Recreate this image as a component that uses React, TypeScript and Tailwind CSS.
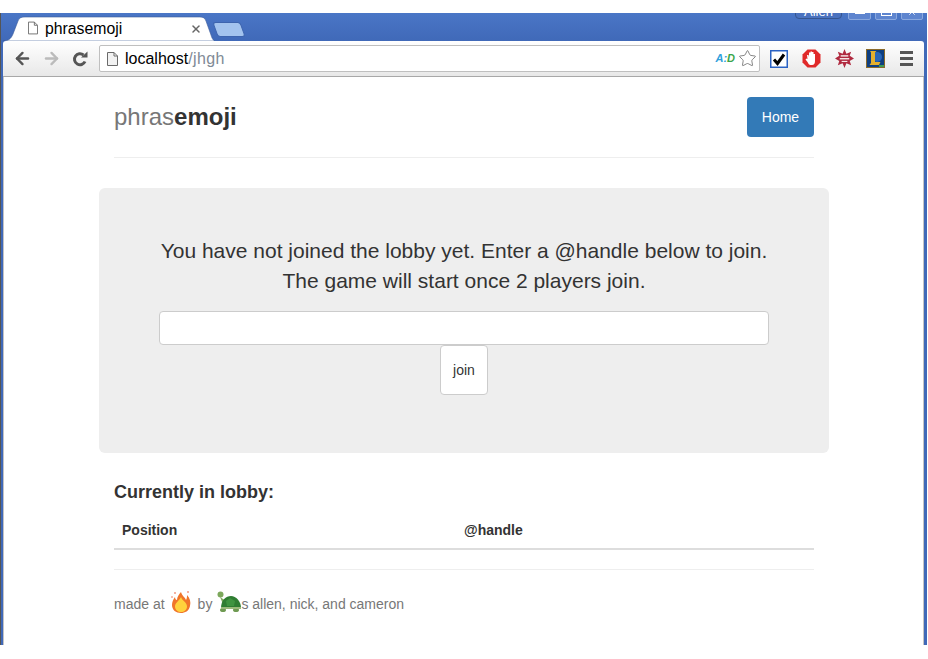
import { ArrowLeft, ArrowRight, Star, X } from "lucide-react";

const sans = "font-['Liberation_Sans',Arial,sans-serif]";

const PageIcon = ({ w, h, fill }: { w: number; h: number; fill: string }) => (
  <svg width={w} height={h} viewBox="0 0 11 14">
    <path d="M0.500 0.500 H7 L10.500 4 V13.500 H0.500 Z M7 0.500 V4 H10.500" fill={fill} stroke="#6a6a6a" strokeWidth="1" />
  </svg>
);

const Reload = () => (
  <svg width="16" height="16" viewBox="0 0 16 16">
    <path d="M13 10.500 A5.500 5.500 0 1 1 11.500 4" fill="none" stroke="#555" strokeWidth="3" />
    <path d="M9 6.500 L15.500 6.500 L15.500 0.500 Z" fill="#555" />
  </svg>
);

const TabShape = () => (
  <svg width="212" height="28" viewBox="0 0 212 28" className="absolute left-[2px] top-0">
    <path
      d="M0 28 C5 28 8 26 10 21 L15 8 C16 5 18 4 22 4 L197 4 C200 4 202 5 203 8 L208 22 C209 26 211 28 212 28 Z"
      fill="#ffffff"
      stroke="#3a5a98"
      strokeWidth="0.6"
    />
  </svg>
);

const Extensions = () => (
  <div className="flex items-center">
    <svg width="18" height="18" viewBox="0 0 18 18">
      <rect x="0.750" y="0.750" width="16.500" height="16.500" fill="#ffffff" stroke="#2a62c4" strokeWidth="1.500" />
      <path d="M4 9.500 L7.500 13.500 L14 4.500" fill="none" stroke="#000000" strokeWidth="3" />
    </svg>
    <svg width="19" height="19" viewBox="0 0 19 19" className="ml-[14px]">
      <path d="M5.500 0.500 H13.500 L18.500 5.500 V13.500 L13.500 18.500 H5.500 L0.500 13.500 V5.500 Z" fill="#e02a2a" />
      <path
        d="M5.500 10 L5 6 H6.500 L7 8 V3.500 H8.500 V8 V2.500 H10 V8 V3 H11.500 V8.500 V5 H13 V12 C13 14.500 12 16 10 16 H8.500 C7 16 6.500 15 5.500 13 L3.500 10.500 L4.500 9.500 Z"
        fill="#ffffff"
      />
    </svg>
    <svg width="19" height="19" viewBox="0 0 20 20" className="ml-[14px]">
      <path
        d="M10 0 L12 5 L17 3 L15.500 7 L20 10 L15.500 12.500 L17 17 L12 15 L10 20 L8 15 L3 17 L4.500 12.500 L0 10 L4.500 7 L3 3 L8 5 Z"
        fill="#b02a40"
      />
      <rect x="6" y="6.500" width="8" height="1.500" fill="#f6e8e8" />
      <rect x="5" y="9.500" width="10" height="1.500" fill="#f6e8e8" />
      <rect x="7" y="12.500" width="6" height="1.200" fill="#f6e8e8" />
    </svg>
    <svg width="19" height="19" viewBox="0 0 19 19" className="ml-[12px]">
      <rect x="0.500" y="0.500" width="18" height="18" fill="#0f3f80" stroke="#8a6a2a" />
      <circle cx="11" cy="8" r="5" fill="#2a66b8" />
      <path d="M4 2 H10.500 L9 3.500 V13 H14.500 L13 16 H3.500 L5 14 V3.500 Z" fill="#e4b02e" />
      <rect x="13" y="16" width="5" height="2" fill="#3f9a55" />
    </svg>
    <div className="ml-[15px] flex w-[13px] flex-col gap-[3px]">
      <div className="h-[3px] bg-[#555]" />
      <div className="h-[3px] bg-[#555]" />
      <div className="h-[3px] bg-[#555]" />
    </div>
  </div>
);

const TitleBar = () => (
  <div className="relative h-[28px] shrink-0 overflow-hidden bg-gradient-to-b from-[#4a76c6] to-[#4069b8]">
    <TabShape />
    <div className="absolute left-[27px] top-[8px]">
      <PageIcon w={10} h={14} fill="#ffffff" />
    </div>
    <span className="absolute left-[44px] top-[7px] text-[15.800px] leading-[18px] text-black">phrasemoji</span>
    <X size={12} strokeWidth={3} className="absolute left-[189px] top-[10px] text-[#666]" />
    <div className="absolute left-[214px] top-[9px] h-[15px] w-[28px] skew-x-[20deg] rounded-[3px] border border-[#3d64ae] bg-[#a3c3ee]" />
    <div className="absolute -top-[6px] left-[794px] flex h-[12px] w-[47px] items-end justify-center rounded-[4px] border border-[#35558f] bg-[#4a72bf] text-[13px] leading-[12px] text-white">
      Allen
    </div>
    <div className="absolute -top-[6px] left-[847px] flex h-[13px] w-[23px] items-end justify-center rounded-[2px] border border-[#8aa8de] bg-[#5e85cf] pb-[5px]">
      <div className="h-[2px] w-[10px] bg-white" />
    </div>
    <div className="absolute -top-[6px] left-[874px] flex h-[13px] w-[22px] items-end justify-center rounded-[2px] border border-[#8aa8de] bg-[#5e85cf] pb-[3px]">
      <div className="h-[5px] w-[11px] border border-t-0 border-white" />
    </div>
    <div className="absolute -top-[6px] left-[900px] flex h-[13px] w-[22px] items-end justify-center rounded-[2px] border border-[#8aa8de] bg-[#5e85cf]">
      <X size={10} strokeWidth={2} className="mb-[2px] text-white" />
    </div>
  </div>
);

const Toolbar = () => (
  <div className="flex h-[36px] shrink-0 items-center rounded-t-[3px] border-b border-[#a8a8a8] bg-gradient-to-b from-white to-[#e8e8e8] pl-[10px]">
    <ArrowLeft size={19} strokeWidth={3} className="text-[#555]" />
    <ArrowRight size={19} strokeWidth={3} className="ml-[10px] text-[#bbb]" />
    <div className="ml-[11px]">
      <Reload />
    </div>
    <div className="ml-[11px] flex h-[27px] w-[661px] items-center rounded-[2px] border border-[#bfbfbf] bg-white pl-[7px] pr-[2px]">
      <PageIcon w={11} h={14} fill="#f2f2f2" />
      <span className="ml-[7px] text-[16px] leading-none text-black">
        localhost<span className="tracking-[0.400px] text-[#808a96]">/jhgh</span>
      </span>
      <span className="ml-auto text-[11px] font-bold italic leading-none text-[#2f9fdc]">
        A:<span className="text-[#3aa64a]">D</span>
      </span>
      <Star size={19} strokeWidth={1} className="ml-[3px] text-[#666]" />
    </div>
    <div className="ml-[10px]">
      <Extensions />
    </div>
  </div>
);

const Fire = () => (
  <svg width="22" height="24" viewBox="0 0 22 24" className="-mt-[3px] ml-[5px]">
    <path
      d="M11 2 C12 6 15 7 16 10 C17 8 17 7 17 5 C20 8 21 12 20 16 C19 21 15 23 11 23 C6 23 2 20 2 15 C2 12 3 10 5 7 C5 9 6 10 7 10 C7 7 9 4 11 2 Z"
      fill="#f0752a"
    />
    <path
      d="M11 7 C12 11 17 12 17 16.500 C17 20 14 22 11 22 C8 22 5 20 5 16.500 C5 13 9 11 11 7 Z"
      fill="#ffd23c"
    />
    <circle cx="5" cy="3" r="0.800" fill="#e8502a" />
    <circle cx="18" cy="2" r="0.800" fill="#e8502a" />
    <circle cx="2" cy="7" r="0.700" fill="#e8502a" />
  </svg>
);

const Turtle = () => (
  <svg width="24" height="22" viewBox="0 0 24 22" className="-mt-[4px] ml-[5px]">
    <circle cx="3.500" cy="3.500" r="3" fill="#7da85c" />
    <path d="M3 6 L6 13 L9 10 Z" fill="#7da85c" />
    <ellipse cx="6" cy="19" rx="3" ry="2" fill="#6f9a52" />
    <ellipse cx="19" cy="19" rx="3" ry="2" fill="#6f9a52" />
    <path d="M4 17 C4 9 9 5 14 5 C19 5 24 10 24 17 Z" fill="#2f7d32" />
    <path d="M9 10 L13 7 L18 10 L17 15 L10 15 Z" fill="#3f9440" />
    <rect x="4" y="16" width="20" height="2" fill="#9ab97a" />
  </svg>
);

export default function App() {
  return (
    <div className={`${sans} h-[659px] w-[928px] overflow-hidden bg-white`}>
      <div className="mt-[13px] flex h-[632px] flex-col border-l border-r border-l-[#555555] border-r-white bg-[#4069b8]">
        <TitleBar />
        <div className="ml-[2px] mr-[3px] flex min-h-0 flex-1 flex-col">
          <Toolbar />
          <div className="flex-1 border-x border-[#c4c4c4] bg-white pl-[95px] pr-[94px]">
            <div className="mx-[15px] flex h-[81px] items-start justify-between border-b border-[#eeeeee] pt-[20px]">
              <div className="pt-[6px] text-[24px] leading-[28px] text-[#777777]">
                phras<span className="font-bold text-[#333333]">emoji</span>
              </div>
              <button className="h-[40px] w-[67px] rounded-[4px] bg-[#337ab7] text-[14px] text-white">Home</button>
            </div>
            <div className="mt-[30px] flex h-[265px] flex-col items-center rounded-[6px] bg-[#eeeeee] pt-[48px]">
              <p className="text-center text-[21px] leading-[30px] text-[#333333]">
                You have not joined the lobby yet. Enter a @handle below to join.
                <br />
                The game will start once 2 players join.
              </p>
              <input className="mt-[15px] h-[34px] w-[610px] rounded-[4px] border border-[#cccccc] bg-white" />
              <button className="h-[50px] w-[48px] rounded-[4px] border border-[#cccccc] bg-white text-[14px] text-[#333333]">
                join
              </button>
            </div>
            <div className="mx-[15px]">
              <h4 className="mt-[29px] text-[18px] font-bold leading-[20px] text-[#333333]">Currently in lobby:</h4>
              <div className="mt-[10px] flex h-[38px] items-center border-b-2 border-[#dddddd] px-[8px] text-[14px] font-bold text-[#333333]">
                <div className="w-[342px]">Position</div>
                <div>@handle</div>
              </div>
              <div className="mt-[19px] flex h-[48px] items-center border-t border-[#eeeeee] pt-[20px] text-[14px] leading-[28px] text-[#777777]">
                <span>made at</span>
                <Fire />
                <span className="ml-[6px]">by</span>
                <Turtle />
                <span>s allen, nick, and cameron</span>
              </div>
            </div>
          </div>
        </div>
      </div>
    </div>
  );
}
